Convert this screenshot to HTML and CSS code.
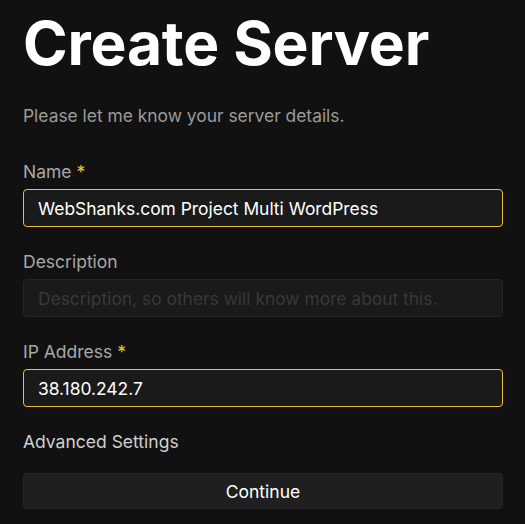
FILE: index.html
```html
<!DOCTYPE html>
<html lang="en">

<head>
    <meta charset="UTF-8">
    <title>Create Server</title>
    <link rel="stylesheet" href="styles.css">
</head>

<body>
    <div class="container">
        <h1>Create Server</h1>
        <p class="intro">Please let me know your server details.</p>

        <form id="serverForm">
            <div class="field">
                <label for="name">Name <span class="req">*</span></label>
                <input type="text" id="name" class="active" value="WebShanks.com Project Multi WordPress">
            </div>

            <div class="field">
                <label for="description">Description</label>
                <input type="text" id="description" placeholder="Description, so others will know more about this.">
            </div>

            <div class="field">
                <label for="ip">IP Address <span class="req">*</span></label>
                <input type="text" id="ip" class="active" value="38.180.242.7">
            </div>

            <div class="advanced">Advanced Settings</div>

            <button type="submit">Continue</button>
        </form>
    </div>
</body>

</html>
```

FILE: styles.css
```css
body {
    font-family: Inter, "Noto Sans", sans-serif;
    margin: 0;
    background-color: #111111;
    color: #ffffff;
}

.container {
    padding: 0 22px 0 23px;
}

h1 {
    font-size: 60.5px;
    font-weight: 700;
    line-height: 72px;
    margin: 7px 0 0 0;
    letter-spacing: -0.2px;
}

.intro {
    color: #9a9a9a;
    font-size: 17.4px;
    line-height: 24px;
    margin: 25px 0 0 0;
}

form {
    margin-top: 32px;
}

.field {
    margin-bottom: 23px;
}

label {
    display: block;
    color: #a8a8a8;
    font-size: 17.5px;
    line-height: 24px;
    margin-bottom: 5px;
}

.req {
    color: #f5c518;
}

input {
    box-sizing: border-box;
    width: 100%;
    height: 38px;
    padding: 0 14px;
    font-family: Inter, "Noto Sans", sans-serif;
    font-size: 17.4px;
    color: #ffffff;
    background-color: #1a1a1a;
    border: 1px solid #262626;
    border-radius: 4px;
    outline: none;
}

input.active {
    border-color: #eec03a;
}

input::placeholder {
    color: #383838;
}

.advanced {
    color: #d0d0d0;
    font-size: 17.5px;
    line-height: 24px;
    margin-bottom: 19px;
}

button {
    width: 100%;
    height: 36px;
    font-family: Inter, "Noto Sans", sans-serif;
    font-size: 17.5px;
    color: #ffffff;
    background-color: #1f1f1f;
    border: 1px solid #262626;
    border-radius: 4px;
}
```
